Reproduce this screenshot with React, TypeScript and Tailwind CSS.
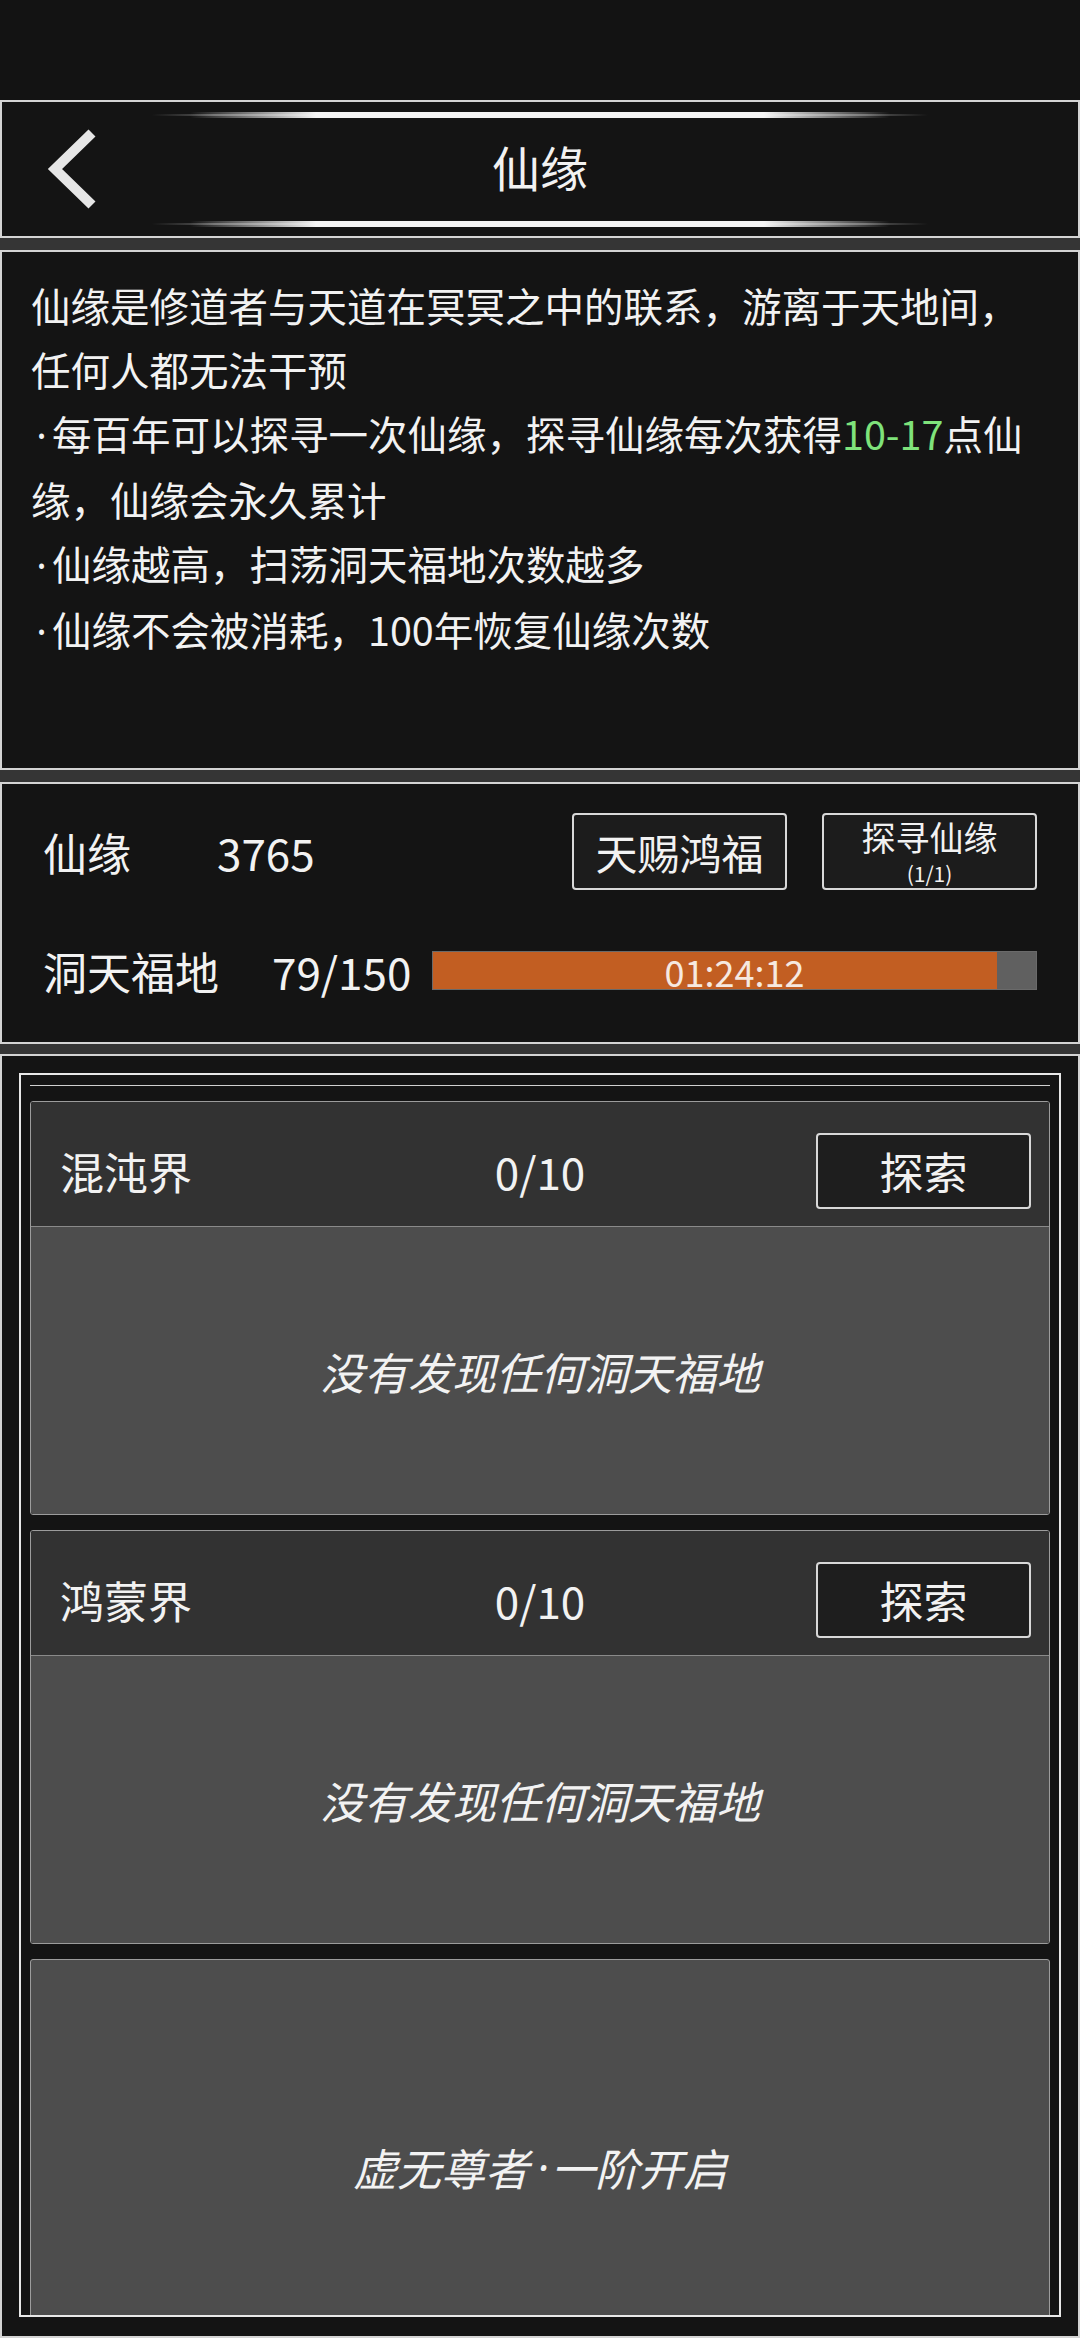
import type { ReactNode } from 'react'

const FONT = "font-['Noto_Sans_CJK_SC','Noto_Sans',sans-serif]"
const PANEL = 'border-2 border-[#d4d4d4] bg-[#141414]'

const Gap = ({ h = 'h-[12px]' }: { h?: string }) => (
  <div className={`${h} shrink-0 bg-[#353535]`} />
)

// narrow middle dot, the CJK font draws it full width
const Dot = ({ w = 'w-[21px]', pad = '' }: { w?: string; pad?: string }) => (
  <span className={`inline-block ${w} ${pad} text-center font-['Noto_Sans',sans-serif]`}>·</span>
)

const Glow = () => (
  <div className="flex h-[7px] w-[776px] items-center justify-center bg-[linear-gradient(90deg,transparent,#5a5a5a_8%,#5a5a5a_92%,transparent)] bg-[length:100%_2px] bg-center bg-no-repeat">
    <div className="h-[6px] w-[700px] rounded-full bg-[linear-gradient(90deg,transparent,#f4f4f4_18%,#f4f4f4_82%,transparent)]" />
  </div>
)

const Header = () => (
  <header className={`flex h-[138px] shrink-0 ${PANEL}`}>
    <div className="flex w-[148px] items-center">
      <svg width="100" height="134" viewBox="0 0 100 134" className="-ml-[2px]">
        <path
          d="M92 31 L55 67 L92 103"
          fill="none"
          stroke="#e6e6e6"
          strokeWidth="10"
          strokeLinejoin="miter"
        />
      </svg>
    </div>
    <div className="flex flex-1 flex-col items-center justify-between py-[9px]">
      <Glow />
      <h1 className="-mt-[6px] text-[48px] leading-none">仙缘</h1>
      <Glow />
    </div>
    <div className="w-[148px]" />
  </header>
)

const Line = ({ children }: { children: ReactNode }) => (
  <div className="whitespace-nowrap">{children}</div>
)

const Intro = () => (
  <section className={`h-[520px] shrink-0 px-[29px] pt-[21px] text-[39.5px] leading-[64px] ${PANEL}`}>
    <Line>仙缘是修道者与天道在冥冥之中的联系，游离于天地间，</Line>
    <Line>任何人都无法干预</Line>
    <Line>
      <Dot />
      每百年可以探寻一次仙缘，探寻仙缘每次获得<span className="text-[#7fe37b]">10-17</span>点仙
    </Line>
    <Line>缘，仙缘会永久累计</Line>
    <Line>
      <Dot />
      仙缘越高，扫荡洞天福地次数越多
    </Line>
    <Line>
      <Dot />
      仙缘不会被消耗，100年恢复仙缘次数
    </Line>
  </section>
)

const BTN =
  'flex h-[77px] w-[215px] flex-col items-center justify-center rounded-[4px] border-2 border-[#d8d8d8] bg-[#1c1c1c]'

const Stats = ({ progress }: { progress: number }) => (
  <section className={`h-[262px] shrink-0 px-[41px] pt-[29px] ${PANEL}`}>
    <div className="flex h-[77px] items-center text-[44px]">
      <span className="w-[174px]">仙缘</span>
      <span>3765</span>
      <div className="ml-auto flex gap-[35px]">
        <button type="button" className={`${BTN} text-[42px] leading-none`}>
          天赐鸿福
        </button>
        <button type="button" className={BTN}>
          <span className="text-[34px] leading-[34px]">探寻仙缘</span>
          <span className="mt-[8px] text-[21px] leading-[22px]">(1/1)</span>
        </button>
      </div>
    </div>
    <div className="mt-[42px] flex h-[77px] items-center text-[44px]">
      <span className="w-[229px]">洞天福地</span>
      <span className="w-[160px]">79/150</span>
      <div className="grid h-[39px] flex-1 border border-[#6a6a6a] bg-[#606060]">
        <div className="[grid-area:1/1] h-full bg-[#c25e22]" style={{ width: `${progress}%` }} />
        <div className="[grid-area:1/1] flex items-center justify-center text-[36px] leading-none text-[#f6e9e0]">
          01:24:12
        </div>
      </div>
    </div>
  </section>
)

const CARD = 'shrink-0 rounded-[3px] border border-[#9c9c9c]'

const Realm = ({ name, count }: { name: string; count: string }) => (
  <div className={`${CARD} flex flex-col overflow-hidden`}>
    <div className="grid h-[124px] grid-cols-[1fr_auto_1fr] items-center bg-[#323232] px-[18px] pt-[14px] text-[44px]">
      <span className="pl-[11px]">{name}</span>
      <span>{count}</span>
      <button
        type="button"
        className="flex h-[76px] w-[215px] items-center justify-center justify-self-end rounded-[4px] border-2 border-[#d8d8d8] bg-[#1e1e1e] text-[44px] leading-none"
      >
        探索
      </button>
    </div>
    <div className="flex h-[288px] items-center justify-center border-t border-[#8a8a8a] bg-[#4d4d4d] text-[44px] italic">
      没有发现任何洞天福地
    </div>
  </div>
)

const RealmList = () => (
  <section className={`flex min-h-0 flex-1 flex-col px-[17px] pt-[17px] pb-[19px] ${PANEL}`}>
    <div className="flex min-h-0 flex-1 flex-col overflow-hidden border-2 border-[#e8e8e8] px-[9px] pt-[10px]">
      <div className="h-px shrink-0 bg-[#d0d0d0]" />
      <div className="mt-[15px] flex flex-col gap-[15px]">
        <Realm name="混沌界" count="0/10" />
        <Realm name="鸿蒙界" count="0/10" />
        <div className={`${CARD} flex h-[416px] items-center justify-center bg-[#4d4d4d] text-[44px] italic`}>
          虚无尊者
          <Dot w="w-[22px]" pad="pl-[6px]" />
          一阶开启
        </div>
      </div>
    </div>
  </section>
)

export default function App() {
  return (
    <div className={`flex h-[2338px] w-[1080px] flex-col overflow-hidden bg-[#131313] text-[#f2f2f2] ${FONT}`}>
      <div className="h-[100px] shrink-0" />
      <Header />
      <Gap />
      <Intro />
      <Gap />
      <Stats progress={93.6} />
      <Gap h="h-[10px]" />
      <RealmList />
    </div>
  )
}
